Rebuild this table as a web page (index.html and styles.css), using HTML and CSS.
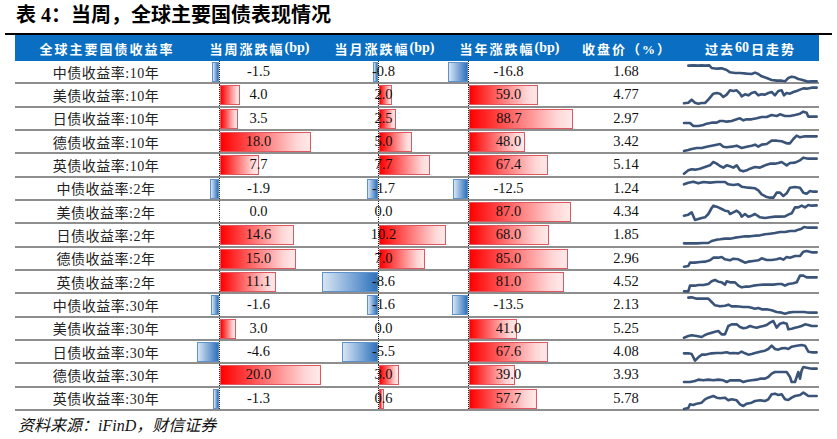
FILE: index.html
```html
<!DOCTYPE html>
<html lang="zh-CN">
<head>
<meta charset="utf-8">
<title>全球主要国债表现情况</title>
<link rel="stylesheet" href="styles.css">
</head>
<body>
<div class="title">表 4：当周，全球主要国债表现情况</div>
<div class="rule"></div>
<div class="table">
  <div class="row head">
    <div class="hc">全球主要国债收益率</div>
    <div class="hc">当周涨跌幅<span class="lat">(bp)</span></div>
    <div class="hc">当月涨跌幅<span class="lat">(bp)</span></div>
    <div class="hc">当年涨跌幅<span class="lat">(bp)</span></div>
    <div class="hc">收盘价（%）</div>
    <div class="hc">过去<span class="lat">60</span>日走势</div>
  </div>

  <div class="row">
    <div class="name">中债收益率:10年</div>
    <div class="bc w"><div class="track"><div class="neg"><i class="bn" style="width:7px"></i></div><div class="pos"></div></div><span class="v">-1.5</span></div>
    <div class="bc m"><div class="track"><div class="neg"><i class="bn" style="width:5px"></i></div><div class="pos"></div></div><span class="v">-0.8</span></div>
    <div class="bc y"><div class="track"><div class="neg"><i class="bn" style="width:20px"></i></div><div class="pos"></div></div><span class="v">-16.8</span></div>
    <div class="px">1.68</div>
    <div class="sp"><svg viewBox="0 0 417 64" preserveAspectRatio="none"><polyline points="25,14 40,13 55,14 65,13 75,14 88,13 95,21 110,23 125,22 140,27 150,34 165,36 180,36 200,38 215,39 225,35 235,39 245,46 260,51 275,57 290,59 305,59 315,61 325,51 335,47 345,49 355,54 365,56 375,59 385,62 395,61 410,61"/></svg></div>
  </div>

  <div class="row">
    <div class="name">美债收益率:10年</div>
    <div class="bc w"><div class="track"><div class="neg"></div><div class="pos"><i class="bp" style="width:20px"></i></div></div><span class="v">4.0</span></div>
    <div class="bc m"><div class="track"><div class="neg"></div><div class="pos"><i class="bp" style="width:13px"></i></div></div><span class="v">2.0</span></div>
    <div class="bc y"><div class="track"><div class="neg"></div><div class="pos"><i class="bp" style="width:69px"></i></div></div><span class="v">59.0</span></div>
    <div class="px">4.77</div>
    <div class="sp"><svg viewBox="0 0 417 64" preserveAspectRatio="none"><polyline points="12,58 25,56 35,47 45,56 55,59 65,57 75,57 85,47 95,35 100,29 110,27 120,29 130,39 140,32 150,19 160,21 170,19 180,29 185,37 195,31 205,34 215,27 225,24 235,34 245,31 255,32 265,27 275,24 285,34 295,21 305,19 312,34 320,27 330,29 340,24 350,21 360,17 370,13 380,14 395,11 410,11"/></svg></div>
  </div>

  <div class="row">
    <div class="name">日债收益率:10年</div>
    <div class="bc w"><div class="track"><div class="neg"></div><div class="pos"><i class="bp" style="width:18px"></i></div></div><span class="v">3.5</span></div>
    <div class="bc m"><div class="track"><div class="neg"></div><div class="pos"><i class="bp" style="width:17px"></i></div></div><span class="v">2.5</span></div>
    <div class="bc y"><div class="track"><div class="neg"></div><div class="pos"><i class="bp" style="width:104px"></i></div></div><span class="v">88.7</span></div>
    <div class="px">2.97</div>
    <div class="sp"><svg viewBox="0 0 417 64" preserveAspectRatio="none"><polyline points="12,45 30,45 40,54 55,54 70,51 80,47 95,44 110,44 120,39 130,39 140,41 155,39 170,34 180,31 190,37 200,34 215,34 230,31 245,27 260,27 275,21 290,24 300,19 315,24 330,24 345,21 360,17 370,11 380,14 385,26 395,26 410,26"/></svg></div>
  </div>

  <div class="row">
    <div class="name">德债收益率:10年</div>
    <div class="bc w"><div class="track"><div class="neg"></div><div class="pos"><i class="bp" style="width:91px"></i></div></div><span class="v">18.0</span></div>
    <div class="bc m"><div class="track"><div class="neg"></div><div class="pos"><i class="bp" style="width:33px"></i></div></div><span class="v">5.0</span></div>
    <div class="bc y"><div class="track"><div class="neg"></div><div class="pos"><i class="bp" style="width:56px"></i></div></div><span class="v">48.0</span></div>
    <div class="px">3.42</div>
    <div class="sp"><svg viewBox="0 0 417 64" preserveAspectRatio="none"><polyline points="12,60 25,57 35,54 50,51 65,51 80,47 95,44 110,41 120,39 130,47 140,49 155,47 170,44 185,51 200,47 215,44 225,41 235,47 245,41 260,39 275,29 290,29 305,31 320,37 330,37 340,24 350,14 360,19 375,16 390,16 410,16"/></svg></div>
  </div>

  <div class="row">
    <div class="name">英债收益率:10年</div>
    <div class="bc w"><div class="track"><div class="neg"></div><div class="pos"><i class="bp" style="width:39px"></i></div></div><span class="v">7.7</span></div>
    <div class="bc m"><div class="track"><div class="neg"></div><div class="pos"><i class="bp" style="width:51px"></i></div></div><span class="v">7.7</span></div>
    <div class="bc y"><div class="track"><div class="neg"></div><div class="pos"><i class="bp" style="width:79px"></i></div></div><span class="v">67.4</span></div>
    <div class="px">5.14</div>
    <div class="sp"><svg viewBox="0 0 417 64" preserveAspectRatio="none"><polyline points="12,59 25,49 35,46 45,47 60,44 75,39 90,34 100,24 110,29 120,36 130,41 140,34 150,37 160,41 170,34 180,49 190,52 200,49 210,44 225,39 240,41 255,34 270,29 285,29 295,27 305,24 320,34 330,27 345,26 360,19 370,11 385,14 400,14 410,14"/></svg></div>
  </div>

  <div class="row">
    <div class="name">中债收益率:2年</div>
    <div class="bc w"><div class="track"><div class="neg"><i class="bn" style="width:9px"></i></div><div class="pos"></div></div><span class="v">-1.9</span></div>
    <div class="bc m"><div class="track"><div class="neg"><i class="bn" style="width:11px"></i></div><div class="pos"></div></div><span class="v">-1.7</span></div>
    <div class="bc y"><div class="track"><div class="neg"><i class="bn" style="width:15px"></i></div><div class="pos"></div></div><span class="v">-12.5</span></div>
    <div class="px">1.24</div>
    <div class="sp"><svg viewBox="0 0 417 64" preserveAspectRatio="none"><polyline points="12,19 25,14 40,11 55,16 70,12 90,14 110,12 135,12 145,19 160,21 175,19 185,26 205,29 225,31 235,37 245,49 258,56 270,59 280,59 290,44 300,44 310,54 320,46 330,29 345,27 360,29 370,44 380,47 390,39 400,41 410,41"/></svg></div>
  </div>

  <div class="row">
    <div class="name">美债收益率:2年</div>
    <div class="bc w"><div class="track"><div class="neg"></div><div class="pos"></div></div><span class="v">0.0</span></div>
    <div class="bc m"><div class="track"><div class="neg"></div><div class="pos"></div></div><span class="v">0.0</span></div>
    <div class="bc y"><div class="track"><div class="neg"></div><div class="pos"><i class="bp" style="width:102px"></i></div></div><span class="v">87.0</span></div>
    <div class="px">4.34</div>
    <div class="sp"><svg viewBox="0 0 417 64" preserveAspectRatio="none"><polyline points="12,44 25,41 35,34 45,57 55,54 65,51 75,49 85,39 95,21 100,14 110,17 125,24 135,29 145,31 150,39 160,34 170,29 180,37 185,47 195,39 205,47 215,44 225,39 240,49 255,51 270,49 285,47 300,47 315,46 325,41 335,37 345,19 355,19 365,14 375,19 385,12 395,14 410,13"/></svg></div>
  </div>

  <div class="row">
    <div class="name">日债收益率:2年</div>
    <div class="bc w"><div class="track"><div class="neg"></div><div class="pos"><i class="bp" style="width:74px"></i></div></div><span class="v">14.6</span></div>
    <div class="bc m"><div class="track"><div class="neg"></div><div class="pos"><i class="bp" style="width:67px"></i></div></div><span class="v">10.2</span></div>
    <div class="bc y"><div class="track"><div class="neg"></div><div class="pos"><i class="bp" style="width:80px"></i></div></div><span class="v">68.0</span></div>
    <div class="px">1.85</div>
    <div class="sp"><svg viewBox="0 0 417 64" preserveAspectRatio="none"><polyline points="12,58 30,58 50,58 70,57 85,57 95,51 110,47 120,46 135,44 150,44 165,41 180,39 195,37 210,37 225,35 240,34 255,31 270,29 285,27 300,24 315,24 330,21 345,21 355,17 365,14 372,9 385,11 400,11 410,11"/></svg></div>
  </div>

  <div class="row">
    <div class="name">德债收益率:2年</div>
    <div class="bc w"><div class="track"><div class="neg"></div><div class="pos"><i class="bp" style="width:76px"></i></div></div><span class="v">15.0</span></div>
    <div class="bc m"><div class="track"><div class="neg"></div><div class="pos"><i class="bp" style="width:46px"></i></div></div><span class="v">7.0</span></div>
    <div class="bc y"><div class="track"><div class="neg"></div><div class="pos"><i class="bp" style="width:99px"></i></div></div><span class="v">85.0</span></div>
    <div class="px">2.96</div>
    <div class="sp"><svg viewBox="0 0 417 64" preserveAspectRatio="none"><polyline points="12,56 25,54 30,44 45,44 60,42 75,41 90,37 100,29 115,29 125,27 135,34 150,37 160,32 175,34 185,39 195,44 205,41 220,39 235,37 245,31 260,36 275,36 290,34 300,31 310,35 320,27 330,29 345,24 360,24 370,11 380,9 395,13 410,13"/></svg></div>
  </div>

  <div class="row">
    <div class="name">英债收益率:2年</div>
    <div class="bc w"><div class="track"><div class="neg"></div><div class="pos"><i class="bp" style="width:56px"></i></div></div><span class="v">11.1</span></div>
    <div class="bc m"><div class="track"><div class="neg"><i class="bn" style="width:56px"></i></div><div class="pos"></div></div><span class="v">-8.6</span></div>
    <div class="bc y"><div class="track"><div class="neg"></div><div class="pos"><i class="bp" style="width:95px"></i></div></div><span class="v">81.0</span></div>
    <div class="px">4.52</div>
    <div class="sp"><svg viewBox="0 0 417 64" preserveAspectRatio="none"><polyline points="12,61 25,61 30,44 45,44 55,42 70,42 85,39 95,31 105,27 115,32 125,34 135,41 140,31 150,34 165,34 175,44 185,49 195,47 205,47 220,44 235,42 250,41 265,41 280,41 295,39 305,39 315,44 325,39 340,37 350,34 360,14 370,14 380,19 395,19 410,19"/></svg></div>
  </div>

  <div class="row">
    <div class="name">中债收益率:30年</div>
    <div class="bc w"><div class="track"><div class="neg"><i class="bn" style="width:8px"></i></div><div class="pos"></div></div><span class="v">-1.6</span></div>
    <div class="bc m"><div class="track"><div class="neg"><i class="bn" style="width:11px"></i></div><div class="pos"></div></div><span class="v">-1.6</span></div>
    <div class="bc y"><div class="track"><div class="neg"><i class="bn" style="width:16px"></i></div><div class="pos"></div></div><span class="v">-13.5</span></div>
    <div class="px">2.13</div>
    <div class="sp"><svg viewBox="0 0 417 64" preserveAspectRatio="none"><polyline points="25,11 35,10 50,14 65,14 85,14 95,24 105,34 120,37 135,35 145,32 155,37 170,37 190,39 205,39 215,41 225,44 235,42 245,46 260,46 275,49 290,54 305,56 315,59 325,56 340,54 355,54 370,54 380,55 395,56 410,56"/></svg></div>
  </div>

  <div class="row">
    <div class="name">美债收益率:30年</div>
    <div class="bc w"><div class="track"><div class="neg"></div><div class="pos"><i class="bp" style="width:16px"></i></div></div><span class="v">3.0</span></div>
    <div class="bc m"><div class="track"><div class="neg"></div><div class="pos"></div></div><span class="v">0.0</span></div>
    <div class="bc y"><div class="track"><div class="neg"></div><div class="pos"><i class="bp" style="width:48px"></i></div></div><span class="v">41.0</span></div>
    <div class="px">5.25</div>
    <div class="sp"><svg viewBox="0 0 417 64" preserveAspectRatio="none"><polyline points="12,59 25,54 35,52 50,54 65,57 75,51 85,47 95,44 105,41 115,39 125,49 135,49 145,24 155,19 170,19 180,27 190,31 200,29 210,24 220,27 230,29 240,26 250,24 260,21 270,14 280,9 290,29 300,17 310,14 320,17 325,34 335,32 345,29 355,27 365,24 375,19 385,21 395,24 410,24"/></svg></div>
  </div>

  <div class="row">
    <div class="name">日债收益率:30年</div>
    <div class="bc w"><div class="track"><div class="neg"><i class="bn" style="width:22px"></i></div><div class="pos"></div></div><span class="v">-4.6</span></div>
    <div class="bc m"><div class="track"><div class="neg"><i class="bn" style="width:36px"></i></div><div class="pos"></div></div><span class="v">-5.5</span></div>
    <div class="bc y"><div class="track"><div class="neg"></div><div class="pos"><i class="bp" style="width:79px"></i></div></div><span class="v">67.6</span></div>
    <div class="px">4.08</div>
    <div class="sp"><svg viewBox="0 0 417 64" preserveAspectRatio="none"><polyline points="12,37 25,37 35,39 45,59 55,49 65,41 75,41 85,39 95,37 110,36 125,36 140,34 150,37 160,36 175,37 185,32 195,37 205,41 215,39 225,36 240,32 255,29 265,24 275,14 285,24 295,26 305,22 315,21 325,24 335,17 350,14 365,12 375,14 385,32 395,34 410,34"/></svg></div>
  </div>

  <div class="row">
    <div class="name">德债收益率:30年</div>
    <div class="bc w"><div class="track"><div class="neg"></div><div class="pos"><i class="bp" style="width:101px"></i></div></div><span class="v">20.0</span></div>
    <div class="bc m"><div class="track"><div class="neg"></div><div class="pos"><i class="bp" style="width:20px"></i></div></div><span class="v">3.0</span></div>
    <div class="bc y"><div class="track"><div class="neg"></div><div class="pos"><i class="bp" style="width:46px"></i></div></div><span class="v">39.0</span></div>
    <div class="px">3.93</div>
    <div class="sp"><svg viewBox="0 0 417 64" preserveAspectRatio="none"><polyline points="12,54 30,54 45,51 55,47 70,49 85,47 100,49 115,47 130,49 140,54 150,49 165,49 180,49 190,54 200,51 215,49 230,47 240,44 255,44 265,39 275,29 285,24 300,24 320,24 330,39 335,54 345,54 355,24 360,44 365,19 370,9 380,11 395,14 410,14"/></svg></div>
  </div>

  <div class="row">
    <div class="name">英债收益率:30年</div>
    <div class="bc w"><div class="track"><div class="neg"><i class="bn" style="width:6px"></i></div><div class="pos"></div></div><span class="v">-1.3</span></div>
    <div class="bc m"><div class="track"><div class="neg"></div><div class="pos"><i class="bp" style="width:5px"></i></div></div><span class="v">0.6</span></div>
    <div class="bc y"><div class="track"><div class="neg"></div><div class="pos"><i class="bp" style="width:68px"></i></div></div><span class="v">57.7</span></div>
    <div class="px">5.78</div>
    <div class="sp"><svg viewBox="0 0 417 64" preserveAspectRatio="none"><polyline points="12,63 25,60 30,49 40,51 50,47 65,44 75,34 85,29 100,24 110,29 120,31 135,29 145,37 155,34 170,37 180,49 190,54 200,47 215,44 225,39 240,37 255,39 265,34 275,19 285,17 295,21 305,19 315,34 325,36 335,29 345,24 360,21 370,14 375,17 385,24 400,24 410,24"/></svg></div>
  </div>
</div>
<div class="source">资料来源：iFinD，财信证券</div>
</body>
</html>
```

FILE: styles.css
```css
* { box-sizing: border-box; }

body {
  margin: 0;
  background: #fff;
  color: #111;
  font-family: "Liberation Serif", "Noto Sans CJK SC", serif;
}

.title {
  height: 33px;
  padding-left: 16px;
  font-size: 20px;
  font-weight: bold;
  line-height: 30px;
  color: #000;
}

.rule {
  height: 2px;
  margin: 0 5px;
  background: #000;
}

.table {
  width: 804px;
  margin-left: 15px;
}

.row {
  display: grid;
  grid-template-columns: 182px 125px 125px 125px 108px 139px;
  height: 23.33px;
  border-bottom: 2px solid #8e8e8e;
}

.row.head {
  height: 26px;
  border-bottom: 0;
  background: #0a6fc2;
  color: #fff;
}

.hc {
  display: flex;
  align-items: center;
  justify-content: center;
  font-size: 13px;
  font-weight: bold;
  letter-spacing: 2px;
  padding-left: 2px;
}

.hc .lat {
  font-size: 14px;
  letter-spacing: 0;
  margin-right: 2px;
}

.name {
  display: flex;
  align-items: center;
  justify-content: center;
  font-size: 14px;
  letter-spacing: 0.5px;
  color: #222;
}

.px {
  display: flex;
  align-items: center;
  justify-content: center;
  font-size: 14.5px;
}

.bc {
  display: grid;
}

.bc > .track,
.bc > .v {
  grid-area: 1 / 1;
}

.track {
  display: grid;
  height: 100%;
}

.bc.w .track { grid-template-columns: 22px 1fr; }
.bc.m .track { grid-template-columns: 56px 1fr; }
.bc.y .track { grid-template-columns: 21px 1fr; }

.neg {
  display: flex;
  align-items: flex-start;
  justify-content: flex-end;
  padding-top: 1px;
}

.pos {
  display: flex;
  align-items: flex-start;
  justify-content: flex-start;
  padding-top: 1px;
  border-left: 1px dotted #222;
}

.bp,
.bn {
  display: block;
  height: 20px;
}

.bp {
  border: 1px solid #e0575f;
  background: linear-gradient(to right, #ff0000 0%, #ff4a4a 30%, #ffd6d6 85%, #ffeaea 100%);
}

.bn {
  border: 1px solid #5f92cc;
  background: linear-gradient(to left, #2f72bb 0%, #7aa6d6 45%, #d8e5f3 100%);
}

.v {
  position: relative;
  display: flex;
  align-items: center;
  justify-content: center;
  font-size: 14.5px;
  color: #111;
  padding-right: 2px;
}

.sp svg {
  display: block;
  width: 139px;
  height: 21.33px;
  overflow: visible;
}

.sp polyline {
  fill: none;
  stroke: #3a5479;
  stroke-width: 2.6;
  stroke-linejoin: round;
  stroke-linecap: round;
  vector-effect: non-scaling-stroke;
}

.source {
  margin-top: 5px;
  margin-left: 18px;
  font-size: 16px;
  line-height: 20px;
  font-style: italic;
  color: #111;
}
```
